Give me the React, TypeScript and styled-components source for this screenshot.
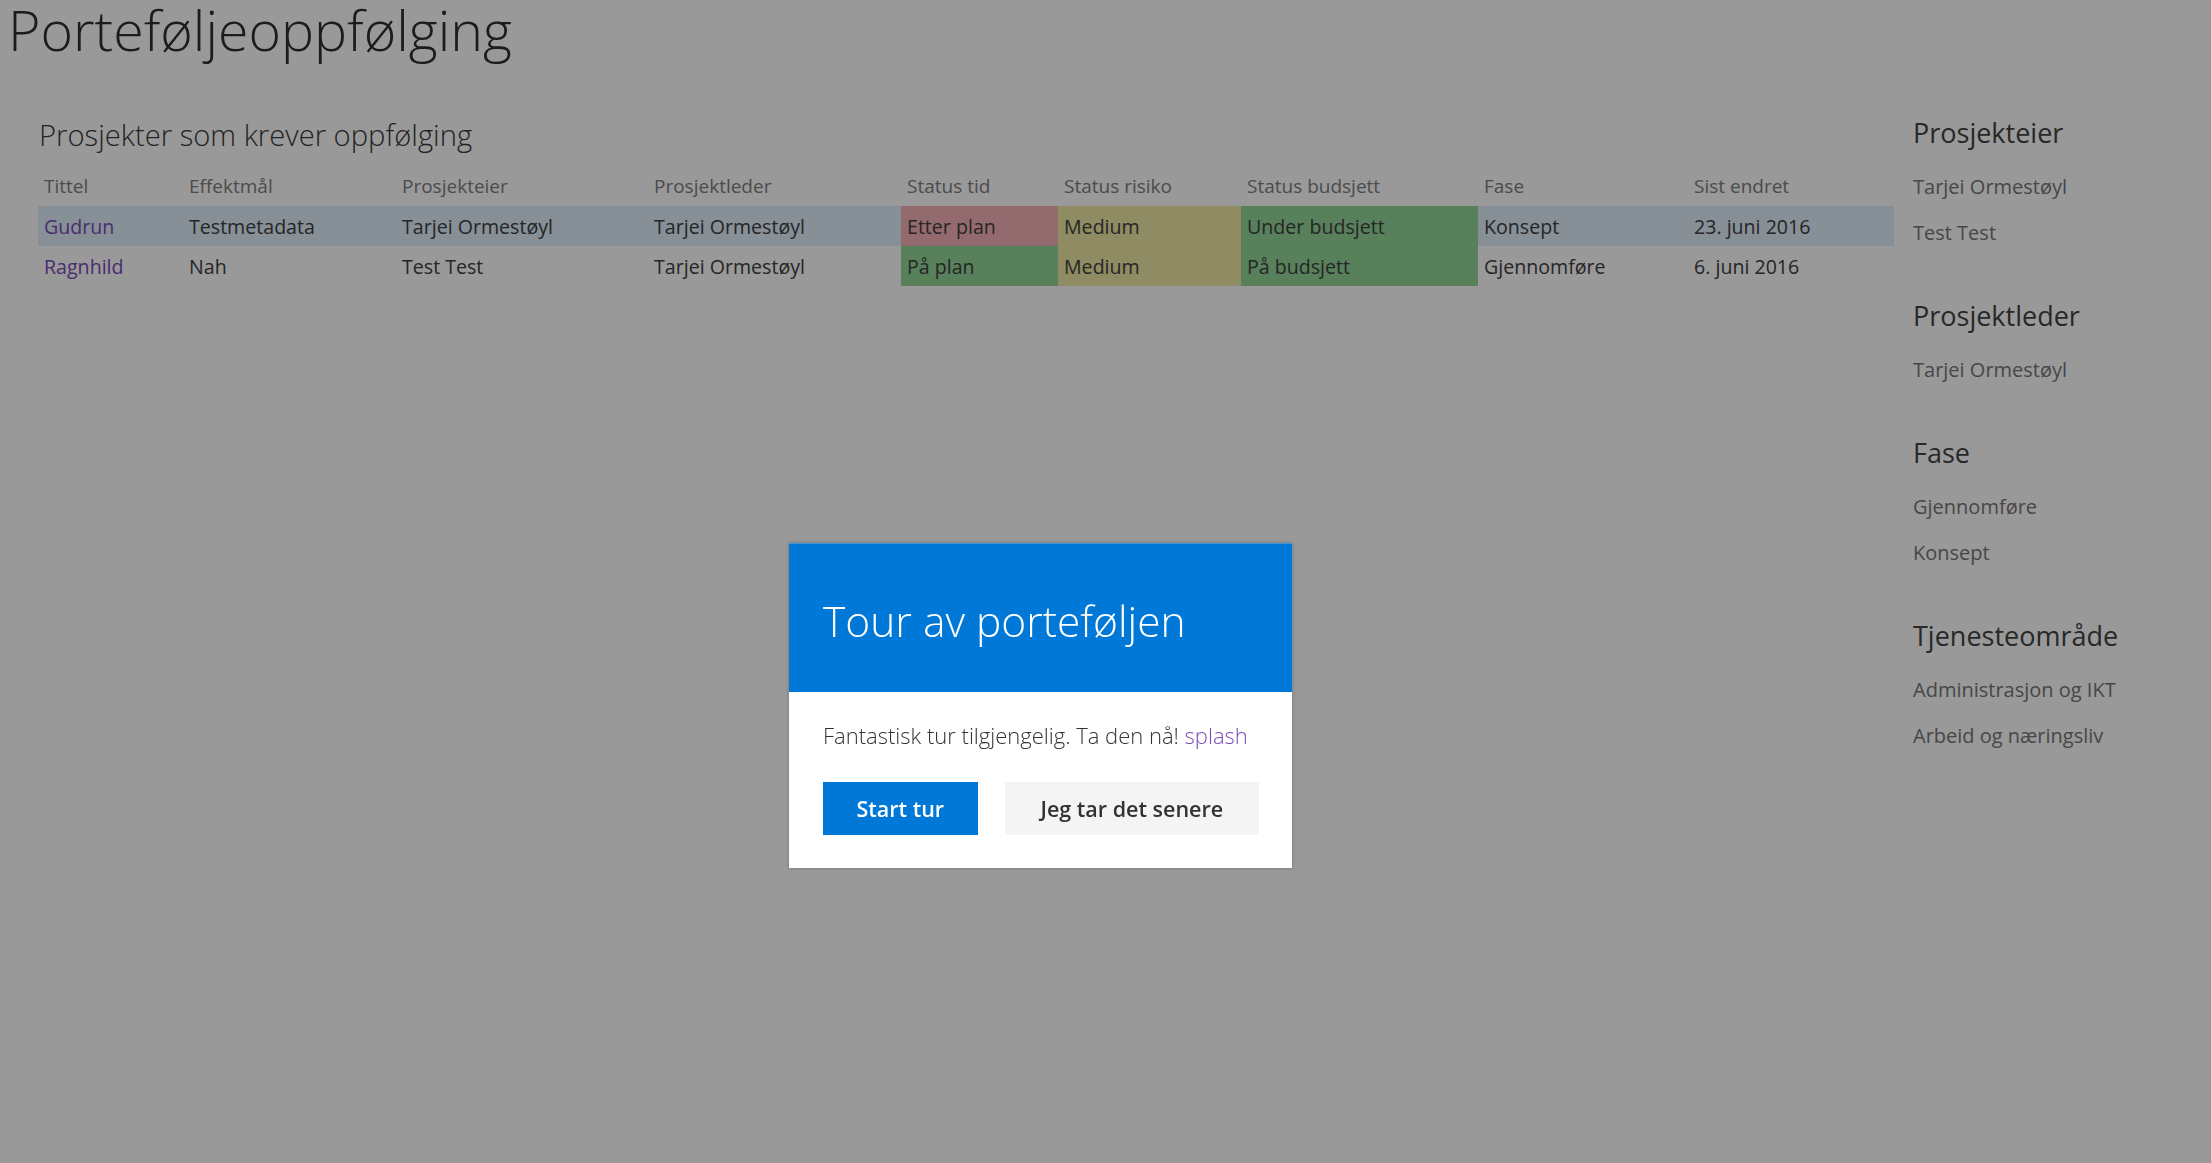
import React from "react";
import styled, { createGlobalStyle } from "styled-components";

const GlobalStyle = createGlobalStyle`
  html, body { margin: 0; padding: 0; background: #ffffff; }
  body { font-family: "Open Sans", "Noto Sans", "Liberation Sans", sans-serif; color: #333; }
  * { box-sizing: border-box; }
`;

const Page = styled.div`
  width: 2211px;
  min-height: 1163px;
  display: flex;
  flex-direction: column;
`;

const Title = styled.h1`
  margin: 0;
  padding: 3px 0 0 8px;
  font-size: 55.5px;
  line-height: 54px;
  font-weight: 300;
  color: #2f2f2f;
`;

const Body = styled.div`
  display: flex;
  align-items: flex-start;
  padding-left: 38px;
`;

const Main = styled.section`
  width: 1856px;
  padding-top: 63px;
`;

const SectionHeading = styled.h2`
  margin: 0 0 16px 1px;
  font-size: 29.2px;
  line-height: 30px;
  font-weight: 300;
  color: #3a3a3a;
`;

const Table = styled.table`
  width: 1856px;
  table-layout: fixed;
  border-collapse: collapse;
`;

const HeadCell = styled.th`
  text-align: left;
  font-weight: 400;
  font-size: 19px;
  color: #7e7e7e;
  height: 40px;
  padding: 0 0 0 6px;
  white-space: nowrap;
`;

const Row = styled.tr<{ $selected?: boolean }>`
  background: ${(p) => (p.$selected ? "#e1eefc" : "transparent")};
`;

const statusColors: Record<string, string> = {
  red: "#f5b2b7",
  yellow: "#eee8a3",
  green: "#91d598",
};

const Cell = styled.td<{ $status?: string }>`
  height: 40px;
  padding: 0 0 0 6px;
  font-size: 19.6px;
  color: #404040;
  white-space: nowrap;
  background: ${(p) => (p.$status ? statusColors[p.$status] : "transparent")};
`;

const Link = styled.a`
  color: #7b4bb8;
  text-decoration: none;
`;

const Sidebar = styled.aside`
  width: 317px;
  padding: 58px 0 0 19px;
  display: flex;
  flex-direction: column;
  gap: 42px;
`;

const Group = styled.div`
  display: flex;
  flex-direction: column;
  gap: 13px;
`;

const GroupHeading = styled.h3`
  margin: 0;
  font-size: 27px;
  line-height: 36px;
  font-weight: 400;
  color: #444;
`;

const GroupList = styled.ul`
  list-style: none;
  margin: 0;
  padding: 0;
`;

const GroupItem = styled.li`
  font-size: 20px;
  line-height: 46px;
  color: #777;
`;

const Overlay = styled.div`
  position: fixed;
  inset: 0;
  background: rgba(0, 0, 0, 0.4);
`;

const Dialog = styled.div`
  position: absolute;
  left: 789px;
  top: 543px;
  width: 503px;
  background: #fff;
  box-shadow: 0 0 4px rgba(0, 0, 0, 0.25);
`;

const DialogHeader = styled.div`
  height: 149px;
  padding: 56px 0 0 34px;
  background: #0078d7;
  border-top: 1px solid #3a95e0;
`;

const DialogTitle = styled.h2`
  margin: 0;
  font-size: 42.5px;
  line-height: 42px;
  font-weight: 300;
  color: #ffffff;
`;

const DialogBody = styled.div`
  padding: 32px 33px 33px 34px;
`;

const DialogText = styled.p`
  margin: 0;
  font-size: 22px;
  line-height: 22px;
  font-weight: 300;
  color: #333;
`;

const Actions = styled.div`
  display: flex;
  gap: 27px;
  margin-top: 36px;
`;

const Button = styled.button<{ $primary?: boolean; $width: number }>`
  width: ${(p) => p.$width}px;
  height: 53px;
  border: none;
  font-family: "Open Sans", "Noto Sans", sans-serif;
  font-size: 21.5px;
  font-weight: 600;
  background: ${(p) => (p.$primary ? "#0078d7" : "#f4f4f4")};
  color: ${(p) => (p.$primary ? "#ffffff" : "#333333")};
  cursor: pointer;
`;

const columns = [
  { title: "Tittel", width: 145 },
  { title: "Effektmål", width: 213 },
  { title: "Prosjekteier", width: 252 },
  { title: "Prosjektleder", width: 253 },
  { title: "Status tid", width: 157 },
  { title: "Status risiko", width: 183 },
  { title: "Status budsjett", width: 237 },
  { title: "Fase", width: 210 },
  { title: "Sist endret", width: 206 },
];

const rows = [
  {
    title: "Gudrun",
    goal: "Testmetadata",
    owner: "Tarjei Ormestøyl",
    leader: "Tarjei Ormestøyl",
    time: { text: "Etter plan", s: "red" },
    risk: { text: "Medium", s: "yellow" },
    budget: { text: "Under budsjett", s: "green" },
    phase: "Konsept",
    changed: "23. juni 2016",
    selected: true,
  },
  {
    title: "Ragnhild",
    goal: "Nah",
    owner: "Test Test",
    leader: "Tarjei Ormestøyl",
    time: { text: "På plan", s: "green" },
    risk: { text: "Medium", s: "yellow" },
    budget: { text: "På budsjett", s: "green" },
    phase: "Gjennomføre",
    changed: "6. juni 2016",
    selected: false,
  },
];

const filters = [
  { heading: "Prosjekteier", items: ["Tarjei Ormestøyl", "Test Test"] },
  { heading: "Prosjektleder", items: ["Tarjei Ormestøyl"] },
  { heading: "Fase", items: ["Gjennomføre", "Konsept"] },
  { heading: "Tjenesteområde", items: ["Administrasjon og IKT", "Arbeid og næringsliv"] },
];

export default function App() {
  return (
    <>
      <GlobalStyle />
      <Page>
        <Title>Porteføljeoppfølging</Title>
        <Body>
          <Main>
            <SectionHeading>Prosjekter som krever oppfølging</SectionHeading>
            <Table>
              <colgroup>
                {columns.map((c) => (
                  <col key={c.title} style={{ width: c.width }} />
                ))}
              </colgroup>
              <thead>
                <tr>
                  {columns.map((c) => (
                    <HeadCell key={c.title}>{c.title}</HeadCell>
                  ))}
                </tr>
              </thead>
              <tbody>
                {rows.map((r) => (
                  <Row key={r.title} $selected={r.selected}>
                    <Cell>
                      <Link href="#">{r.title}</Link>
                    </Cell>
                    <Cell>{r.goal}</Cell>
                    <Cell>{r.owner}</Cell>
                    <Cell>{r.leader}</Cell>
                    <Cell $status={r.time.s}>{r.time.text}</Cell>
                    <Cell $status={r.risk.s}>{r.risk.text}</Cell>
                    <Cell $status={r.budget.s}>{r.budget.text}</Cell>
                    <Cell>{r.phase}</Cell>
                    <Cell>{r.changed}</Cell>
                  </Row>
                ))}
              </tbody>
            </Table>
          </Main>
          <Sidebar>
            {filters.map((f) => (
              <Group key={f.heading}>
                <GroupHeading>{f.heading}</GroupHeading>
                <GroupList>
                  {f.items.map((i) => (
                    <GroupItem key={i}>{i}</GroupItem>
                  ))}
                </GroupList>
              </Group>
            ))}
          </Sidebar>
        </Body>
      </Page>
      <Overlay>
        <Dialog role="dialog">
          <DialogHeader>
            <DialogTitle>Tour av porteføljen</DialogTitle>
          </DialogHeader>
          <DialogBody>
            <DialogText>
              Fantastisk tur tilgjengelig. Ta den nå! <Link href="#">splash</Link>
            </DialogText>
            <Actions>
              <Button $primary $width={155}>Start tur</Button>
              <Button $width={255}>Jeg tar det senere</Button>
            </Actions>
          </DialogBody>
        </Dialog>
      </Overlay>
    </>
  );
}
